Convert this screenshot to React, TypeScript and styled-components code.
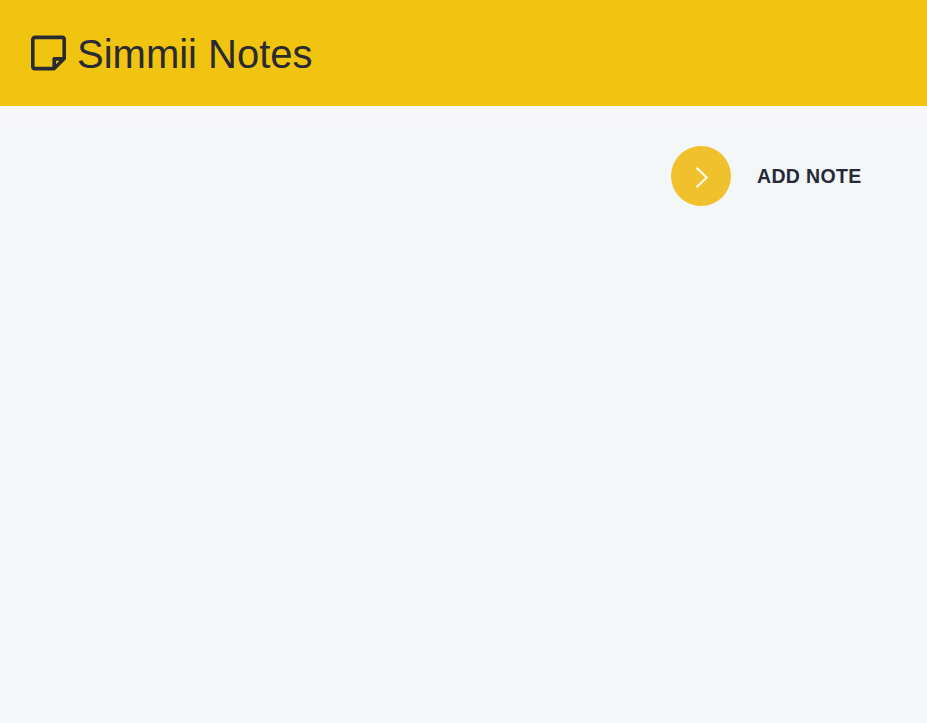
import React from "react";
import styled, { createGlobalStyle } from "styled-components";

const GlobalStyle = createGlobalStyle`
  * { box-sizing: border-box; }
  body {
    margin: 0;
    background: #f3f7f8;
    color: #272838;
    font-family: "Liberation Sans", Arial, sans-serif;
  }
`;

const Header = styled.header`
  display: flex;
  align-items: center;
  height: 106px;
  padding: 0 31px;
  background: #f1c40f;
`;

const NoteIcon = styled.svg`
  display: block;
  width: 35px;
  height: 36px;
  margin-right: 11px;
`;

const Title = styled.h1`
  margin: 0;
  padding-top: 2px;
  color: #292a32;
  font-size: 40px;
  font-weight: 400;
  line-height: 48px;
`;

const Strip = styled.div`
  height: 21px;
  background: #f7f7f9;
`;

const Main = styled.main`
  display: flex;
  justify-content: flex-end;
  padding: 19px 65px 0 0;
`;

const AddButton = styled.button`
  display: flex;
  align-items: center;
  gap: 26px;
  padding: 0;
  border: 0;
  background: none;
  color: inherit;
  font: 700 19.5px/24px "Liberation Sans", Arial, sans-serif;
  letter-spacing: 0.35px;
  cursor: pointer;
`;

const Circle = styled.span`
  display: flex;
  align-items: center;
  justify-content: center;
  width: 60px;
  height: 60px;
  border-radius: 50%;
  background: #f1c12d;
`;

const Label = styled.span`
  width: 105px;
  white-space: nowrap;
  text-align: left;
`;

export default function App() {
  return (
    <>
      <GlobalStyle />
      <Header>
        <NoteIcon viewBox="0 0 35 36" fill="none" stroke="#292a32" strokeWidth="3.6" strokeLinejoin="round">
          <path d="M23.2 33.6H4a2.2 2.2 0 0 1-2.2-2.2V4.6a2.2 2.2 0 0 1 2.2-2.2h27a2.2 2.2 0 0 1 2.2 2.2V23.6L23.2 33.6V23.9H33.2" />
        </NoteIcon>
        <Title>Simmii Notes</Title>
      </Header>
      <Strip />
      <Main>
        <AddButton type="button">
          <Circle>
            <svg width="60" height="60" viewBox="0 0 60 60" fill="none" stroke="#fffdf0" strokeWidth="2">
              <path d="M25.5 21.7L35.8 31.5L25.5 41.3" />
            </svg>
          </Circle>
          <Label>ADD NOTE</Label>
        </AddButton>
      </Main>
    </>
  );
}
